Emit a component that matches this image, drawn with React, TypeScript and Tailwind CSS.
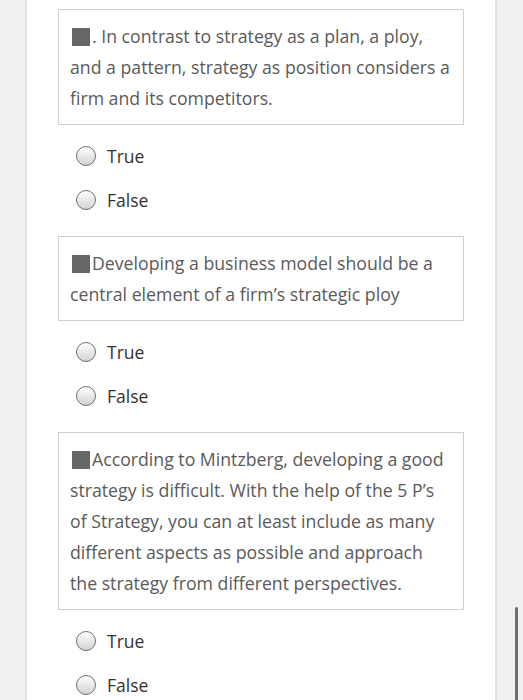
import { ReactNode } from 'react';

const questions: string[] = [
    '. In contrast to strategy as a plan, a ploy, and a pattern, strategy as position considers a firm and its competitors.',
    'Developing a business model should be a central element of a firm\u2019s strategic ploy',
    'According to Mintzberg, developing a good strategy is difficult. With the help of the 5 P\u2019s of Strategy, you can at least include as many different aspects as possible and approach the strategy from different perspectives.',
];

function Radio({ children }: { children: ReactNode }) {
    return (
        <label className="flex h-[44px] items-center pl-[18px] text-[17.5px] text-[#333]">
            <span className="h-[20px] w-[20px] rounded-full border border-[#6f6f6f] bg-gradient-to-b from-white to-[#d2d2d2]" />
            <span className="ml-[11px]">{children}</span>
        </label>
    );
}

function Question({ text }: { text: string }) {
    return (
        <div className="mb-[14px]">
            <div className="border border-[#cfcfcf] px-[11px] pt-[11px] pb-[10px] text-[17.7px] leading-[31px] text-[#5a5a5a]">
                <span className="mr-[2px] ml-[2px] inline-block h-[18px] w-[18px] bg-[#666] align-[-3px]" />
                {text}
            </div>
            <div className="mt-[9px]">
                <Radio>True</Radio>
                <Radio>False</Radio>
            </div>
        </div>
    );
}

export default function App() {
    return (
        <div className="flex h-[700px] overflow-hidden bg-[#f1f1f1] font-['Open_Sans',sans-serif]">
            <div className="w-[27px] shrink-0 border-r-2 border-[#e2e2e2]" />
            <main className="w-[470px] shrink-0 border-r-2 border-[#e2e2e2] bg-white px-[31px] pt-[9px]">
                {questions.map((q, i) => (
                    <Question key={i} text={q} />
                ))}
            </main>
            <div className="relative flex-1">
                <div className="absolute top-[607px] left-[18px] h-[100px] w-[3px] rounded-full bg-[#6f6f6f]" />
            </div>
        </div>
    );
}
